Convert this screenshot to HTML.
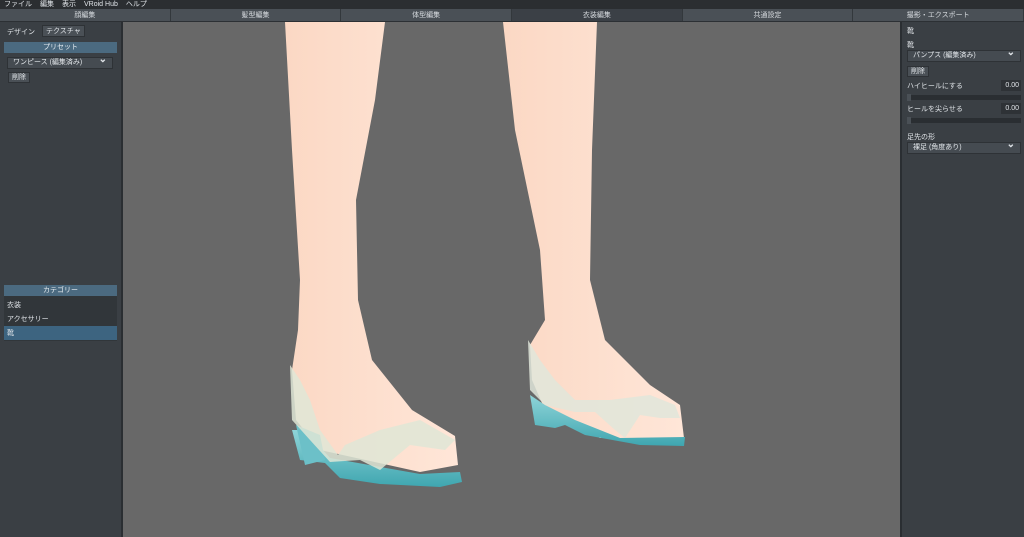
<!DOCTYPE html>
<html><head><meta charset="utf-8"><style>
*{margin:0;padding:0;box-sizing:border-box}
body{width:1024px;height:537px;overflow:hidden;background:#686868;font-family:"Liberation Sans","Noto Sans CJK JP",sans-serif;font-size:7px;color:#e0e4e8;position:relative}
.menu{position:absolute;left:0;top:0;width:1024px;height:9px;background:#2b2e31;font-size:7px;line-height:9px;padding-left:4px;white-space:nowrap}
.menu span{margin-right:8px}
.tabs{position:absolute;top:9px;left:0;width:1024px;height:13px;background:#4a5056;display:flex;border-bottom:1px solid #2c3034}
.tabs div{flex:1;text-align:center;line-height:13px;border-right:1px solid #33383c;color:#d8dce0}
.tabs div.on{background:#3b4046}
.lp{position:absolute;left:0;top:22px;width:123px;height:515px;background:#3a3f44;border-right:2px solid #2a2e32}
.rp{position:absolute;left:900px;top:22px;width:124px;height:515px;background:#3a3f44;border-left:2px solid #2a2e32}
.hdr{position:absolute;background:#4b6a80;text-align:center;line-height:11px;height:11px;color:#e8eef2}
.dd{position:absolute;background:#454b51;border:1px solid #2e3236;height:12px;line-height:10px;padding-left:5px}
.dd:after{content:"⌄";position:absolute;right:5px;top:-3px;font-size:10px;font-weight:bold}
.btn{position:absolute;background:#4a5056;border:1px solid #2e3236;line-height:10px;height:11px;padding:0 3px}
.lbl{position:absolute;white-space:nowrap}
.num{position:absolute;background:#2e3236;width:20px;height:11px;line-height:11px;text-align:right;padding-right:2px}
.sl{position:absolute;height:5px;background:#2a2e32}
.sl:before{content:"";position:absolute;left:0;top:-1px;width:4px;height:7px;background:#4a5056}
</style></head><body>
<svg style="position:absolute;left:0;top:0" width="1024" height="537">
<defs><linearGradient id="sk" x1="0" x2="1"><stop offset="0" stop-color="#fbd8c4"/><stop offset="1" stop-color="#ffe6d8"/></linearGradient>
<linearGradient id="so" x1="0" y1="0" x2="0" y2="1"><stop offset="0" stop-color="#8fd4d8"/><stop offset="1" stop-color="#3fa6b0"/></linearGradient></defs>
<path d="M285,22 L385,22 L375,100 L356,200 L358,300 L372,360 L412,410 L455,436 L458,465 L420,472 L320,450 L296,420 L292,370 L298,330 L300,280 L292,150 Z" fill="url(#sk)"/>
<path d="M503,22 L597,22 L592,150 L590,280 L605,340 L650,385 L680,405 L684,438 L600,438 L545,410 L532,380 L530,345 L545,320 L540,250 L515,130 Z" fill="url(#sk)"/>
<path d="M292,430 L300,460 L325,463 L340,478 L380,484 L440,487 L462,482 L460,472 L420,474 L330,458 L305,430 Z" fill="url(#so)"/>
<path d="M296,425 L305,465 L325,460 L320,435 Z" fill="#6cc0c8"/>
<path d="M530,395 L535,425 L555,428 L565,425 L585,435 L640,445 L684,446 L685,437 L620,438 L575,420 L545,405 Z" fill="url(#so)"/>
<path d="M290,365 L300,380 L310,400 L320,430 L338,455 L345,445 L380,430 L420,420 L455,440 L445,450 L410,445 L380,470 L360,460 L330,462 L310,440 L292,420 Z" fill="#dfe6d6" opacity="0.85"/>
<path d="M528,340 L540,360 L555,380 L575,400 L610,400 L650,395 L675,405 L680,418 L660,418 L640,415 L625,438 L615,430 L595,412 L575,412 L545,405 L530,390 Z" fill="#e0e6da" opacity="0.85"/>
</svg>
<div class="menu"><span>ファイル</span><span>編集</span><span>表示</span><span>VRoid Hub</span><span>ヘルプ</span></div>
<div class="tabs"><div>顔編集</div><div>髪型編集</div><div>体型編集</div><div class="on">衣装編集</div><div>共通設定</div><div>撮影・エクスポート</div></div>
<div class="lp">
<div class="lbl" style="left:7px;top:5px">デザイン</div>
<div class="btn" style="left:42px;top:3px;height:12px;line-height:12px">テクスチャ</div>
<div class="hdr" style="left:4px;top:20px;width:113px">プリセット</div>
<div class="dd" style="left:7px;top:35px;width:106px">ワンピース (編集済み)</div>
<div class="btn" style="left:8px;top:50px">削除</div>
<div class="hdr" style="left:4px;top:263px;width:113px">カテゴリー</div>
<div style="position:absolute;left:4px;top:274px;width:113px;height:45px;background:#31363a"></div>
<div class="lbl" style="left:7px;top:278px">衣装</div>
<div class="lbl" style="left:7px;top:292px">アクセサリー</div>
<div style="position:absolute;left:4px;top:304px;width:113px;height:14px;background:#3d6480"></div>
<div class="lbl" style="left:7px;top:306px">靴</div>
</div>
<div class="rp">
<div class="lbl" style="left:5px;top:4px">靴</div>
<div class="lbl" style="left:5px;top:18px">靴</div>
<div class="dd" style="left:5px;top:28px;width:114px">パンプス (編集済み)</div>
<div class="btn" style="left:5px;top:44px">削除</div>
<div class="lbl" style="left:5px;top:59px">ハイヒールにする</div>
<div class="num" style="left:99px;top:58px">0.00</div>
<div class="sl" style="left:5px;top:73px;width:114px"></div>
<div class="lbl" style="left:5px;top:82px">ヒールを尖らせる</div>
<div class="num" style="left:99px;top:81px">0.00</div>
<div class="sl" style="left:5px;top:96px;width:114px"></div>
<div class="lbl" style="left:5px;top:110px">足先の形</div>
<div class="dd" style="left:5px;top:120px;width:114px">裸足 (角度あり)</div>
</div>
</body></html>
